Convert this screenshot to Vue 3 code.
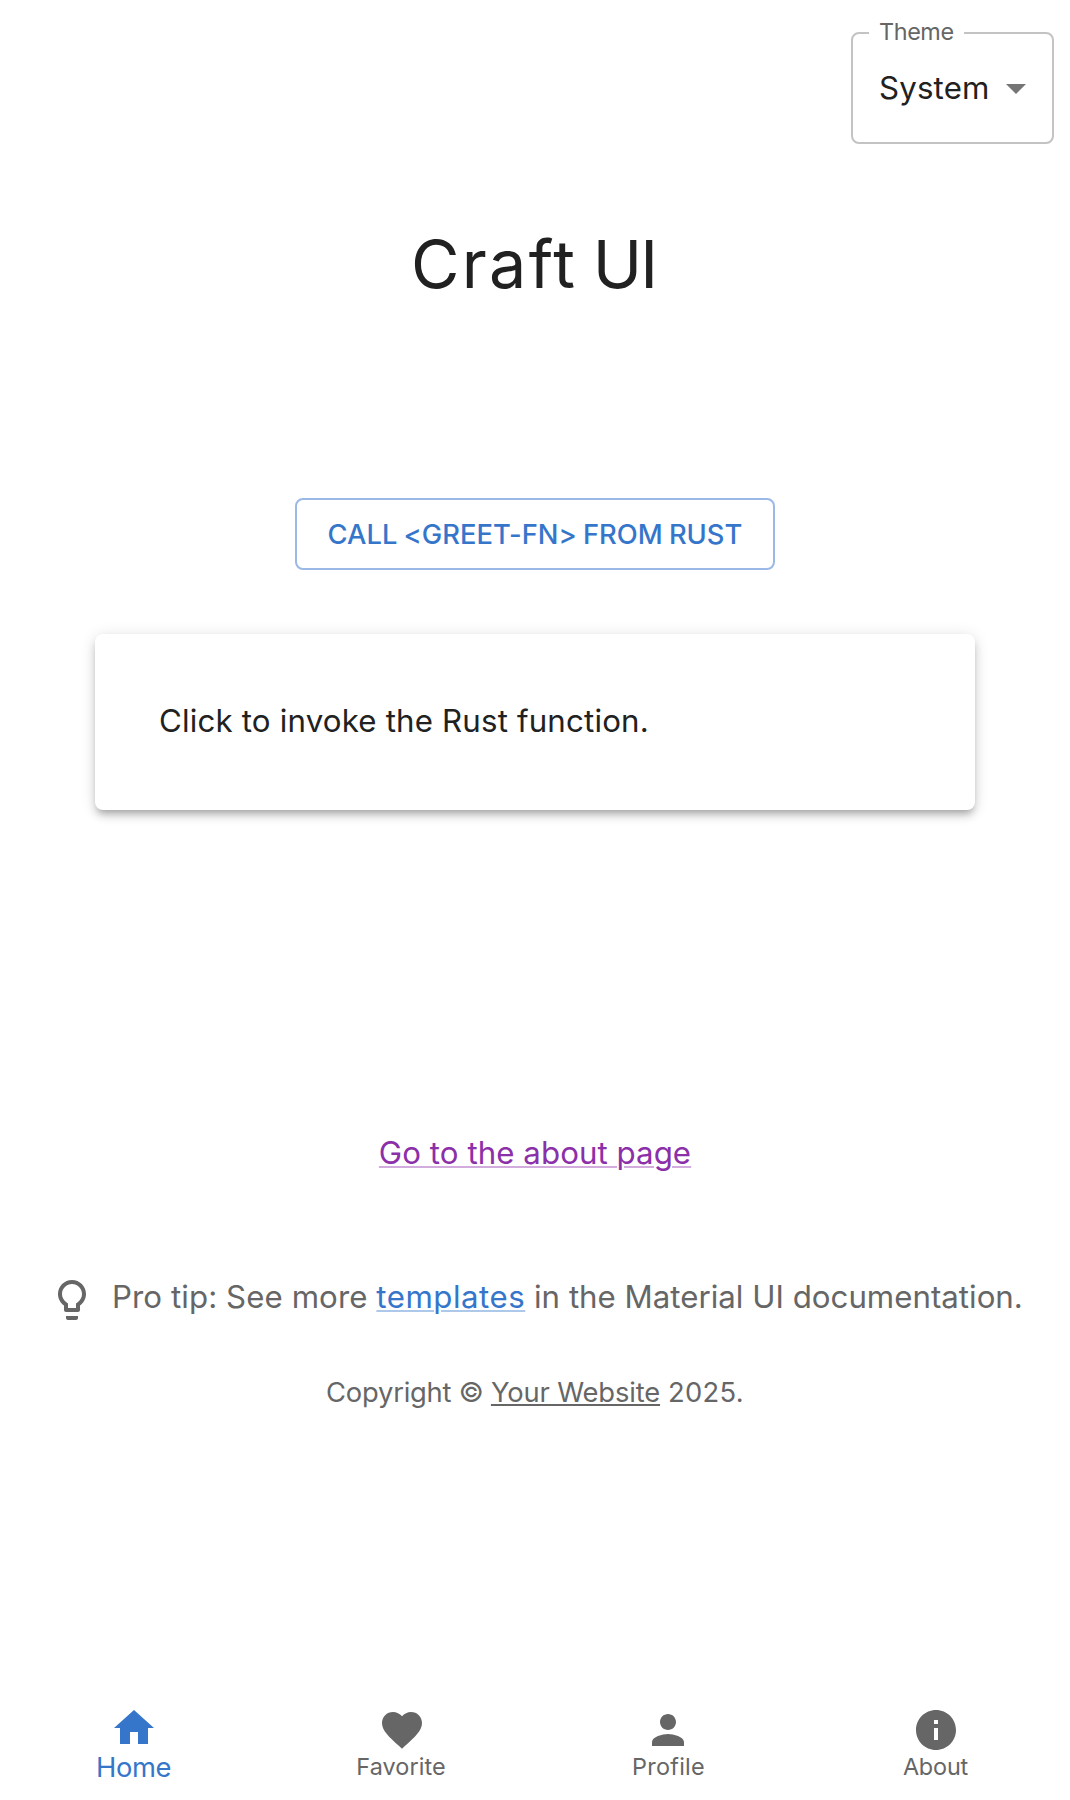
<script setup>
import { ref } from 'vue'

const theme = ref('System')
const message = ref('Click to invoke the Rust function.')
const current = ref('home')

const tabs = [
  { id: 'home', label: 'Home', icon: 'M10 20v-6h4v6h5v-8h3L12 3 2 12h3v8z' },
  {
    id: 'favorite',
    label: 'Favorite',
    icon: 'm12 21.35-1.45-1.32C5.4 15.36 2 12.28 2 8.5 2 5.42 4.42 3 7.5 3c1.74 0 3.41.81 4.5 2.09C13.09 3.81 14.76 3 16.5 3 19.58 3 22 5.42 22 8.5c0 3.78-3.4 6.86-8.55 11.54z',
  },
  {
    id: 'profile',
    label: 'Profile',
    icon: 'M12 12c2.21 0 4-1.79 4-4s-1.79-4-4-4-4 1.79-4 4 1.79 4 4 4m0 2c-2.67 0-8 1.34-8 4v2h16v-2c0-2.66-5.33-4-8-4',
  },
  {
    id: 'about',
    label: 'About',
    icon: 'M12 2C6.48 2 2 6.48 2 12s4.48 10 10 10 10-4.48 10-10S17.52 2 12 2m1 15h-2v-6h2zm0-8h-2V7h2z',
  },
]
</script>

<template>
  <div class="page">
    <header class="top">
      <div class="select">
        <span class="select-label">Theme</span>
        <span class="select-value">{{ theme }}</span>
        <svg class="caret" viewBox="0 0 24 24"><path d="m7 10 5 5 5-5z" /></svg>
      </div>
    </header>

    <main class="content">
      <h1 class="title">Craft <span class="title-end">UI</span></h1>
      <button class="call" type="button">CALL &lt;GREET-FN&gt; FROM RUST</button>
      <section class="card">{{ message }}</section>
      <a class="about-link">Go to the about page</a>
      <p class="tip">
        <svg class="bulb" viewBox="0 0 24 24">
          <path d="M9 21c0 .55.45 1 1 1h4c.55 0 1-.45 1-1v-1H9zm3-19C8.14 2 5 5.14 5 9c0 2.38 1.19 4.47 3 5.74V17c0 .55.45 1 1 1h6c.55 0 1-.45 1-1v-2.26c1.81-1.27 3-3.36 3-5.74 0-3.86-3.14-7-7-7m2.85 11.1-.85.6V16h-4v-2.3l-.85-.6C7.8 12.16 7 10.63 7 9c0-2.76 2.24-5 5-5s5 2.24 5 5c0 1.63-.8 3.16-2.15 4.1" />
        </svg>
        <span><span class="lead">Pro tip: See more </span><a class="templates">templates</a> in the Material UI documentation.</span>
      </p>
      <p class="copyright">Copyright © <a class="website">Your Website</a><span class="year"> 2025.</span></p>
    </main>

    <nav class="nav">
      <a v-for="tab in tabs" :key="tab.id" class="tab" :class="[tab.id, { active: tab.id === current }]">
        <svg class="tab-icon" viewBox="0 0 24 24"><path :d="tab.icon" /></svg>
        <span class="tab-label">{{ tab.label }}</span>
      </a>
    </nav>
  </div>
</template>

<style>
body {
  background: #fff;
}
</style>

<style scoped>
.page {
  box-sizing: border-box;
  height: 1800px;
  display: flex;
  flex-direction: column;
  font-family: Inter, "Liberation Sans", sans-serif;
  font-size: 31.25px;
  color: #212121;
  background: #fff;
}

svg {
  display: block;
  flex: none;
  width: 48px;
  height: 48px;
  fill: currentColor;
}

.top {
  display: flex;
  justify-content: flex-end;
  padding: 32px 16px 0;
}

.select {
  position: relative;
  box-sizing: border-box;
  display: flex;
  align-items: center;
  justify-content: space-between;
  width: 203px;
  height: 112px;
  padding: 0 12px 0 26px;
  border: 2px solid #c3c3c3;
  border-radius: 8px;
}

.select-label {
  position: absolute;
  top: -15px;
  left: 16px;
  box-sizing: border-box;
  width: 95px;
  padding-left: 10px;
  font-size: 23.4px;
  line-height: 25px;
  letter-spacing: -0.4px;
  color: #666;
  background: #fff;
}

.select-value {
  letter-spacing: 0.15px;
  line-height: 46px;
}

.caret {
  color: #757575;
}

.content {
  display: flex;
  flex-direction: column;
  align-items: center;
}

.title {
  margin: 78px 0 0;
  padding-right: 3px;
  font-size: 66.4px;
  font-weight: 400;
  line-height: 84px;
  letter-spacing: 2.3px;
  word-spacing: -5.5px;
}

.title-end {
  letter-spacing: -2px;
}

.call {
  box-sizing: border-box;
  width: 480px;
  height: 72px;
  margin-top: 192px;
  padding: 0;
  border: 2px solid #9ab9e6;
  border-radius: 8px;
  background: transparent;
  font-family: inherit;
  font-size: 27.35px;
  font-weight: 500;
  letter-spacing: 0.02px;
  word-spacing: -1.2px;
  color: #3576cb;
}

.card {
  box-sizing: border-box;
  width: 880px;
  height: 176px;
  margin-top: 64px;
  padding: 64px;
  border-radius: 8px;
  line-height: 46px;
  letter-spacing: 0.17px;
  background: #fff;
  box-shadow:
    0 6px 6px -4px rgba(0, 0, 0, 0.2),
    0 6px 8px 0 rgba(0, 0, 0, 0.14),
    0 2px 16px 0 rgba(0, 0, 0, 0.12);
}

a {
  text-decoration-thickness: 2px;
  text-underline-offset: 2px;
}

.about-link {
  margin-top: 321px;
  line-height: 45px;
  letter-spacing: 0.05px;
  color: #8b30a9;
  text-decoration: underline 2px #d1acdc;
}

.tip {
  align-self: stretch;
  display: flex;
  gap: 16px;
  margin: 99px 0 0;
  padding-left: 48px;
  line-height: 45px;
  white-space: nowrap;
  color: #666;
}

.bulb {
  margin-top: 1px;
}

.lead {
  letter-spacing: 0.07px;
}

.templates {
  letter-spacing: 0.5px;
  color: #3576cb;
  text-decoration: underline 2px #aec8ea;
}

.copyright {
  margin: 49px 0 0;
  font-size: 27.35px;
  line-height: 40px;
  letter-spacing: -0.23px;
  color: #666;
}

.website {
  letter-spacing: -0.15px;
  text-decoration: underline 2px #666;
}

.year {
  letter-spacing: 0.3px;
}

.nav {
  display: grid;
  grid-template-columns: 268px 268px 266px 268px;
  height: 112px;
  margin-top: auto;
  color: #666;
}

.tab {
  display: flex;
  flex-direction: column;
  align-items: center;
  padding-top: 18px;
}

.tab-label {
  font-size: 23.4px;
  line-height: 25px;
}

.active {
  padding-top: 16px;
  color: #3576cb;
}

.active .tab-label {
  margin-right: 1px;
  font-size: 27.35px;
  line-height: 32px;
  letter-spacing: -0.4px;
}

.favorite .tab-label {
  margin-right: 2px;
  letter-spacing: 0.08px;
}

.profile .tab-icon {
  margin-right: 2px;
}

.profile .tab-label {
  margin-right: 1px;
  letter-spacing: 0.27px;
}

.about .tab-label {
  margin-right: 1px;
  letter-spacing: -0.15px;
}
</style>
